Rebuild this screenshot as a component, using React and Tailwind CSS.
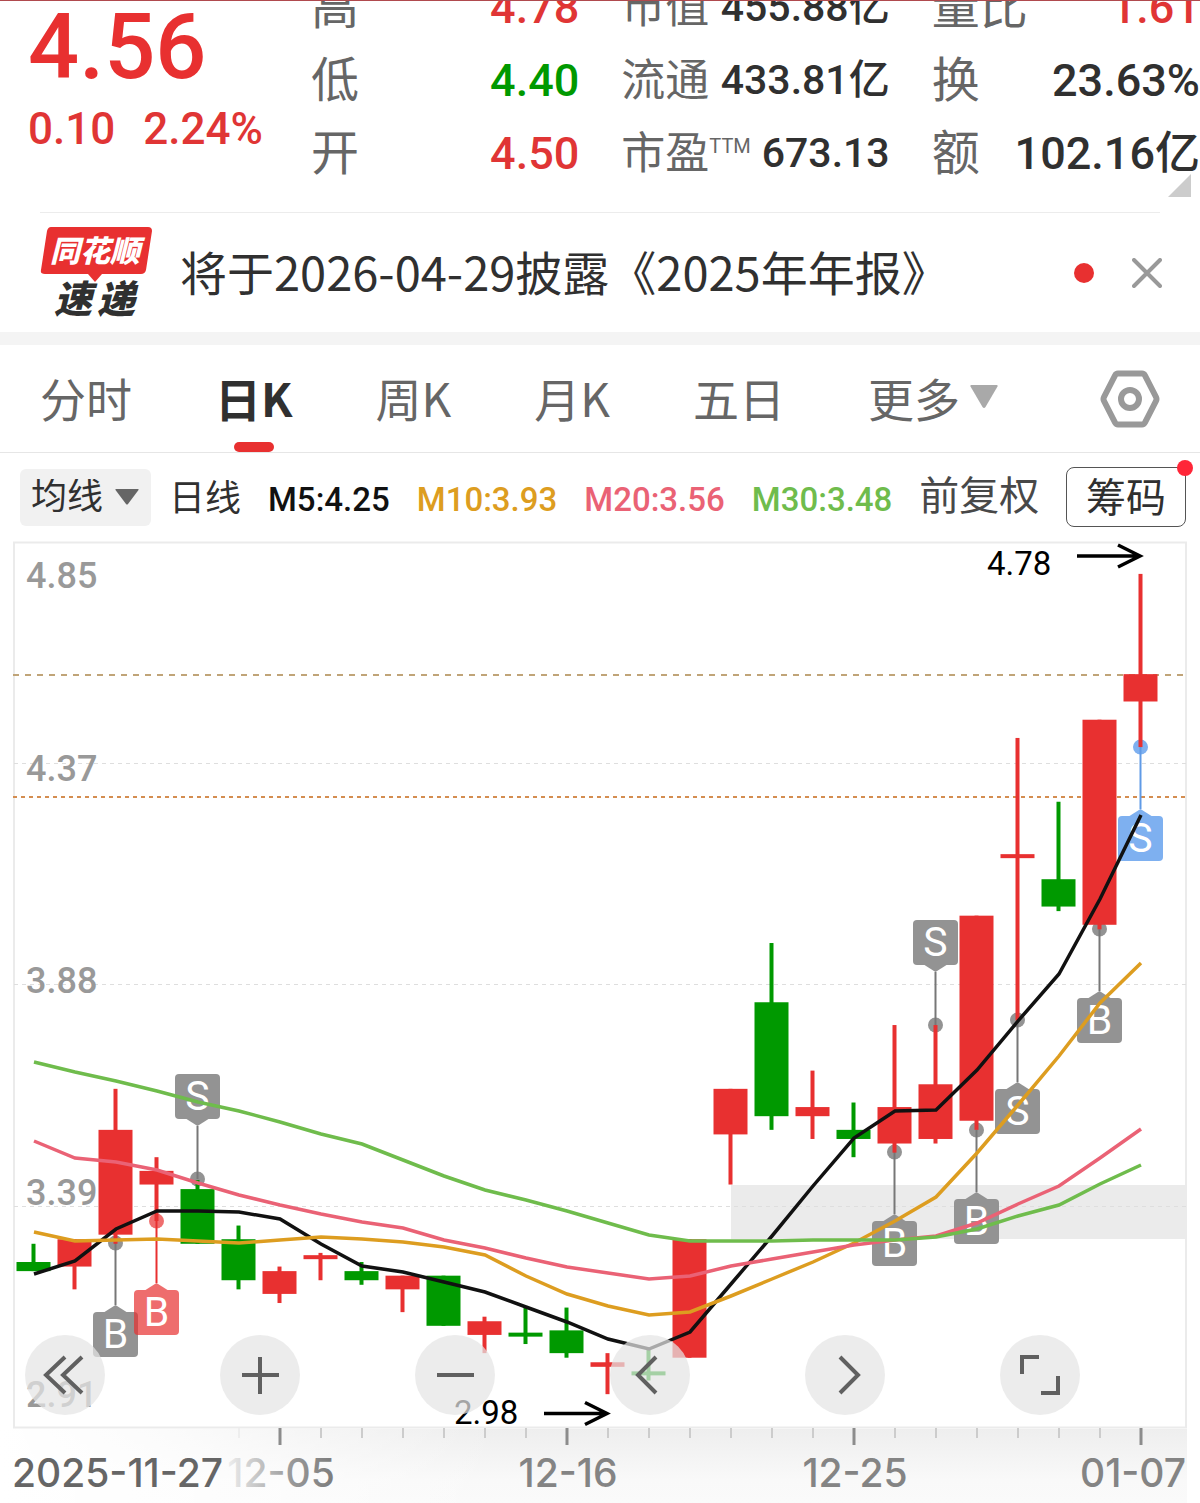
import { useState } from "react";

const RED = "#e83030";
const GREEN = "#009900";
const GRAY = "#939393";

// [open, close, high, low]
const CANDLES = [
  [3.27, 3.25, 3.31, 3.25],
  [3.26, 3.32, 3.32, 3.21],
  [3.33, 3.56, 3.65, 3.31],
  [3.44, 3.47, 3.5, 3.36],
  [3.43, 3.31, 3.45, 3.31],
  [3.32, 3.23, 3.35, 3.21],
  [3.2, 3.25, 3.26, 3.18],
  [3.28, 3.285, 3.29, 3.23],
  [3.25, 3.23, 3.27, 3.22],
  [3.21, 3.24, 3.24, 3.16],
  [3.24, 3.13, 3.24, 3.13],
  [3.11, 3.14, 3.15, 3.07],
  [3.115, 3.11, 3.17, 3.09],
  [3.12, 3.07, 3.17, 3.06],
  [3.04, 3.05, 3.07, 2.98],
  [3.03, 3.025, 3.08, 3.01],
  [3.06, 3.32, 3.32, 3.06],
  [3.55, 3.65, 3.65, 3.44],
  [3.84, 3.59, 3.97, 3.56],
  [3.59, 3.61, 3.69, 3.54],
  [3.56, 3.54, 3.62, 3.5],
  [3.53, 3.61, 3.79, 3.51],
  [3.54, 3.66, 3.79, 3.53],
  [3.58, 4.03, 4.03, 3.56],
  [4.16, 4.165, 4.42, 3.8],
  [4.11, 4.05, 4.28, 4.04],
  [4.01, 4.46, 4.46, 4.0],
  [4.5, 4.56, 4.78, 4.4],
];

// one chart y per candle
const LINES = [
  {
    color: "#111111",
    ys: [733, 720, 688, 670, 670, 671, 678, 703, 725, 731, 741, 751, 766, 781, 798, 808, 791, 743, 695, 645, 597, 570, 569, 529, 480, 433, 358, 274],
  },
  {
    color: "#dd9d20",
    ys: [691, 700, 699, 698, 700, 702, 699, 696, 698, 701, 706, 714, 735, 753, 765, 774, 771, 755, 738, 721, 702, 680, 656, 612, 564, 515, 462, 422],
  },
  {
    color: "#ea6275",
    ys: [600, 617, 621, 629, 642, 654, 664, 673, 681, 687, 699, 707, 717, 726, 732, 738, 735, 725, 718, 711, 704, 699, 695, 682, 663, 645, 617, 588],
  },
  {
    color: "#6fbc4c",
    ys: [521, 531, 540, 550, 561, 570, 581, 593, 603, 619, 635, 649, 659, 670, 682, 694, 700, 700, 700, 699, 699, 699, 696, 688, 675, 664, 643, 624],
  },
];

// buy / sell marks, y is the dot on the wick
const MARKS = [
  { i: 2, t: "B", y: 702, color: GRAY, line: "#777777" },
  { i: 3, t: "B", y: 680, color: RED, line: RED, opacity: 0.7 },
  { i: 4, t: "S", y: 638, color: GRAY, line: "#777777", up: true },
  { i: 21, t: "B", y: 611, color: GRAY, line: "#777777" },
  { i: 22, t: "S", y: 484, color: GRAY, line: "#777777", up: true },
  { i: 23, t: "B", y: 589, color: GRAY, line: "#777777" },
  { i: 24, t: "S", y: 479, color: GRAY, line: "#777777" },
  { i: 26, t: "B", y: 388, color: GRAY, line: "#777777" },
  { i: 27, t: "S", y: 206, color: "#7eb0f0", line: "#5f9ae6" },
];

const Y_LABELS = [
  ["4.85", 47],
  ["4.37", 240],
  ["3.88", 452],
  ["3.39", 664],
  ["2.91", 866],
];

const X_LABELS = [
  { text: "12-05", x: 281, fill: "url(#dateFade)" },
  { text: "12-16", x: 568, fill: "#848484" },
  { text: "12-25", x: 855, fill: "#848484" },
  { text: "01-07", x: 1133, fill: "#848484" },
];

const TABS = ["分时", "日K", "周K", "月K", "五日"];

const xAt = (i) => 33.5 + i * 41;
const yAt = (p) => 1 + (4.85 - p) * 455.7;

function Stat({ label, sup, value, color = "text-[#303030]", small }) {
  return (
    <div className="flex h-[73px] items-center justify-between whitespace-nowrap">
      <dt className={small ? "flex items-start text-[44px] text-[#666]" : "flex text-[48px] text-[#666]"}>
        {label}
        {sup && <span className="pt-1 text-[20px]">{sup}</span>}
      </dt>
      <dd className={`font-medium ${small ? "text-[41px]" : "text-[45px]"} ${color}`}>{value}</dd>
    </div>
  );
}

function Quote() {
  return (
    <header className="relative overflow-hidden border-t border-[#b04a4e]">
      <div className="-mt-[30px] flex pb-[22px] pl-7 leading-none">
        <div className="w-[283px] shrink-0 pt-8 font-medium text-[#e03535]">
          <div className="text-[90px] leading-[90px] text-[#e83030]">4.56</div>
          <div className="flex gap-7 pt-3 text-[44px] leading-[48px]">
            <span>0.10</span>
            <span>2.24%</span>
          </div>
        </div>
        <dl className="grid flex-1 grid-cols-3 gap-x-[42px]">
          <Stat label="高" value="4.78" color="text-[#e03535]" />
          <Stat label="市值" value="455.88亿" small />
          <Stat label="量比" value="1.61" color="text-[#e03535]" />
          <Stat label="低" value="4.40" color="text-[#009900]" />
          <Stat label="流通" value="433.81亿" small />
          <Stat label="换" value="23.63%" />
          <Stat label="开" value="4.50" color="text-[#e03535]" />
          <Stat label="市盈" sup="TTM" value="673.13" small />
          <Stat label="额" value="102.16亿" />
        </dl>
      </div>
      <svg className="absolute bottom-[15px] right-[9px] h-[23px] w-[23px]" viewBox="0 0 23 23">
        <path d="M23 0v23H0z" fill="#cccccc" />
      </svg>
    </header>
  );
}

function Logo() {
  return (
    <svg className="h-[94px] w-[112px] shrink-0" viewBox="0 0 112 94" role="img" aria-label="同花顺速递">
      <path d="M11 1h97q4 0 4 4l-6 39q-1 4-5 4H62l-7 8-7-8H5q-5 0-4-4L7 5q1-4 4-4z" fill={RED} />
      <text x="55" y="36" textAnchor="middle" fontSize="30" fontWeight="900" fontStyle="italic" fill="#fff">同花顺</text>
      <text x="33" y="87" textAnchor="middle" fontSize="38" fontWeight="900" fontStyle="italic" fill="#303030">速</text>
      <text x="76" y="87" textAnchor="middle" fontSize="38" fontWeight="900" fontStyle="italic" fill="#303030">递</text>
    </svg>
  );
}

function Notice({ onClose }) {
  return (
    <section className="mx-10 flex h-[120px] items-center border-t border-[#ececec]">
      <Logo />
      <a href="#notice" className="ml-7 flex-1 whitespace-nowrap pb-1 font-['Noto_Sans_CJK_SC',sans-serif] text-[47px] leading-none text-[#303030]">
        将于2026-04-29披露《2025年年报》
      </a>
      <span className="mr-[38px] h-5 w-5 rounded-full bg-[#e83030]" />
      <button type="button" aria-label="关闭" onClick={onClose} className="-mr-0.5">
        <svg className="h-[30px] w-[30px]" viewBox="0 0 30 30" stroke="#999" strokeWidth="4" strokeLinecap="round">
          <path d="M2 2l26 26M28 2L2 28" />
        </svg>
      </button>
    </section>
  );
}

function Tabs() {
  const [tab, setTab] = useState("日K");
  return (
    <nav className="flex h-[108px] items-center gap-[83px] border-b border-[#e6e6e6] px-10 font-['Noto_Sans_CJK_SC',sans-serif] text-[46px] leading-none text-[#666]">
      {TABS.map((t) => (
        <button
          key={t}
          type="button"
          onClick={() => setTab(t)}
          className={`relative flex h-full items-center whitespace-nowrap pb-1 ${t === tab ? "font-bold text-[#303030]" : ""}`}
        >
          {t}
          {t === tab && <span className="absolute bottom-0 left-1/2 h-[10px] w-10 -translate-x-1/2 rounded-full bg-[#e83030]" />}
        </button>
      ))}
      <button type="button" className="flex h-full items-center gap-[10px] whitespace-nowrap pb-1">
        更多
        <svg className="h-[24px] w-[28px]" viewBox="0 0 28 24">
          <path d="M1 0h26q1 0 .5 1.500L15.500 22q-1.500 2-3 0L.5 1.500Q0 0 1 0z" fill="#a9a9a9" />
        </svg>
      </button>
      <button type="button" aria-label="设置" className="ml-auto">
        <svg className="h-[58px] w-[60px]" viewBox="0 0 60 58" fill="none" stroke="#999" strokeWidth="6" strokeLinejoin="round">
          <path d="M18 3.500h24q2 0 3 2L56 27q1 2 0 4L45 52.500q-1 2-3 2H18q-2 0-3-2L4 31q-1-2 0-4L15 5.500q1-2 3-2z" />
          <circle cx="30" cy="29" r="9" />
        </svg>
      </button>
    </nav>
  );
}

function Averages() {
  return (
    <div className="flex h-[88px] items-center whitespace-nowrap pl-5 pr-[14px] text-[36px] leading-none text-[#303030]">
      <div className="relative">
        <select aria-label="均线" className="block h-[57px] w-[131px] appearance-none rounded-md bg-[#f1f1f1] pl-[11px] outline-none">
          <option>均线</option>
        </select>
        <svg className="pointer-events-none absolute right-3 top-5 h-4 w-6" viewBox="0 0 24 16">
          <path d="M1 0h22q1 0 .5 1L13 15q-1 1-2 0L.5 1Q0 0 1 0z" fill="#666" />
        </svg>
      </div>
      <div className="ml-[18px] flex flex-1 items-center gap-[27px] pt-1">
        <span>日线</span>
        <span className="text-[33px] font-medium text-[#111]">M5:4.25</span>
        <span className="text-[33px] font-medium text-[#dd9d20]">M10:3.93</span>
        <span className="text-[33px] font-medium text-[#ea6275]">M20:3.56</span>
        <span className="text-[33px] font-medium text-[#6fbc4c]">M30:3.48</span>
        <span className="pb-1 text-[40px] text-[#484848]">前复权</span>
      </div>
      <button type="button" className="relative h-[60px] w-[120px] shrink-0 rounded-lg border border-[#555] pt-1 text-[40px]">
        筹码
        <span className="absolute -right-2 -top-2 h-4 w-4 rounded-full bg-[#ff2638]" />
      </button>
    </div>
  );
}

function Candle({ i, open, close, high, low }) {
  const x = xAt(i);
  const color = close >= open ? RED : GREEN;
  const top = yAt(Math.max(open, close));
  return (
    <g fill={color}>
      <rect x={x - 2} y={yAt(high)} width="4" height={yAt(low) - yAt(high)} />
      <rect x={x - 17} y={top} width="34" height={Math.max(4, yAt(Math.min(open, close)) - top)} />
    </g>
  );
}

function Mark({ i, t, y, color, line, opacity = 1, up }) {
  const x = xAt(i);
  const box = up ? y - 105 : y + 69;
  const tip = up ? y - 53 : y + 62;
  const base = up ? y - 60 : y + 69;
  return (
    <g>
      <g fill={color} opacity={opacity}>
        <circle cx={x} cy={y} r="7.500" />
        <path d={`M${x - 11} ${base}L${x} ${tip}L${x + 11} ${base}z`} />
        <rect x={x - 22.5} y={box} width="45" height="45" rx="4" />
      </g>
      <path d={`M${x} ${y}V${tip}`} stroke={line} strokeWidth="2" />
      <text x={x} y={box + 36} textAnchor="middle" fontSize="41" fill="#fff">{t}</text>
    </g>
  );
}

const TOOLS = [
  { label: "最早", d: "M40 22L21 40l19 18M57 22L38 40l19 18" },
  { label: "放大", d: "M22 40h37M40 22v37" },
  { label: "缩小", d: "M22 40h37" },
  { label: "左移", d: "M46 22L28 40l18 18" },
  { label: "右移", d: "M35 22l18 18-18 18" },
  { label: "全屏", d: "M22 39V22h17M58 41v17H41" },
];

function Chart() {
  return (
    <section className="relative">
      <svg className="block w-full" viewBox="0 0 1200 962">
        <defs>
          <linearGradient id="axisBg" x1="0" y1="0" x2="0" y2="1">
            <stop offset="0" stopColor="#eeeeee" />
            <stop offset="0.700" stopColor="#f9f9f9" />
            <stop offset="1" stopColor="#fafafa" />
          </linearGradient>
          <linearGradient id="axisFade" x1="0" y1="0" x2="1" y2="0">
            <stop offset="0" stopColor="#fff" />
            <stop offset="0.300" stopColor="#fff" stopOpacity="0.800" />
            <stop offset="1" stopColor="#fff" stopOpacity="0" />
          </linearGradient>
          <linearGradient id="dateFade" x1="0" y1="0" x2="1" y2="0">
            <stop offset="0" stopColor="#eeeeee" />
            <stop offset="0.600" stopColor="#999999" />
            <stop offset="1" stopColor="#7c7c7c" />
          </linearGradient>
        </defs>

        <rect x="14" y="1.500" width="1172" height="885" fill="#fff" stroke="#ebebeb" strokeWidth="2" />
        <rect x="731" y="644" width="456" height="54" fill="#ebebeb" />
        {[222, 443, 665].map((y) => (
          <path key={y} d={`M14 ${y + 0.5}H1186`} stroke="#dedede" strokeDasharray="4 4" />
        ))}
        <path d="M13 134H1184" stroke="#c0a478" strokeWidth="2" strokeDasharray="6 6" />
        <path d="M13 256H1186" stroke="#d48d50" strokeWidth="2" strokeDasharray="4 4" />

        <g fontSize="36" fontWeight="500" fill="#999">
          {Y_LABELS.map(([text, y]) => (
            <text key={text} x="26" y={y}>{text}</text>
          ))}
        </g>

        {MARKS.map((m) => (
          <Mark key={m.i} {...m} />
        ))}
        {CANDLES.map(([open, close, high, low], i) => (
          <Candle key={i} i={i} open={open} close={close} high={high} low={low} />
        ))}
        {LINES.map(({ color, ys }) => (
          <polyline
            key={color}
            points={ys.map((y, i) => `${xAt(i) + 0.5},${y}`).join(" ")}
            fill="none"
            stroke={color}
            strokeWidth="3.500"
          />
        ))}

        <g fontSize="33" fill="#000">
          <text x="987" y="34">4.78</text>
          <text x="454" y="883">2.98</text>
        </g>
        <g fill="none" stroke="#000" strokeWidth="3.500">
          <path d="M1077 15h63M1118 4l22 11-22 11" />
          <path d="M544 872.500h63M585 861.500l22 11-22 11" />
        </g>

        <rect x="0" y="888" width="1187" height="74" fill="url(#axisBg)" />
        <rect x="0" y="888" width="500" height="74" fill="url(#axisFade)" />
        {CANDLES.map((_, i) => {
          if (i < 5) return null;
          const major = (i - 6) % 7 === 0;
          return (
            <path
              key={i}
              d={major ? `M${xAt(i) + 0.5} 887v17` : `M${xAt(i) + 0.5} 887v10`}
              stroke={major ? "#8c8c8c" : i === 5 ? "#eeeeee" : "#cccccc"}
              strokeWidth={major ? 3 : 2}
            />
          );
        })}
        <g fontSize="39" fontWeight="500" fontFamily="Inter, sans-serif">
          <text x="12" y="946" fill="#666">2025-11-27</text>
          {X_LABELS.map(({ text, x, fill }) => (
            <text key={text} x={x} y="946" textAnchor="middle" fill={fill}>{text}</text>
          ))}
        </g>
      </svg>

      <div className="absolute inset-x-0 bottom-[88px] grid grid-cols-6 pl-[25px] pr-[5px]">
        {TOOLS.map(({ label, d }) => (
          <button key={label} type="button" aria-label={label} className="h-20 w-20 rounded-full bg-[#e5e5e5]/72">
            <svg className="h-20 w-20" viewBox="0 0 80 80" fill="none" stroke="#606060" strokeWidth="4">
              <path d={d} />
            </svg>
          </button>
        ))}
      </div>
    </section>
  );
}

export default function App() {
  const [notice, setNotice] = useState(true);
  return (
    <main className="w-full overflow-hidden bg-white font-[Roboto,'Noto_Sans_CJK_SC',sans-serif]">
      <Quote />
      {notice && <Notice onClose={() => setNotice(false)} />}
      <div className="h-[13px] bg-[#f4f4f4]" />
      <Tabs />
      <Averages />
      <Chart />
    </main>
  );
}
